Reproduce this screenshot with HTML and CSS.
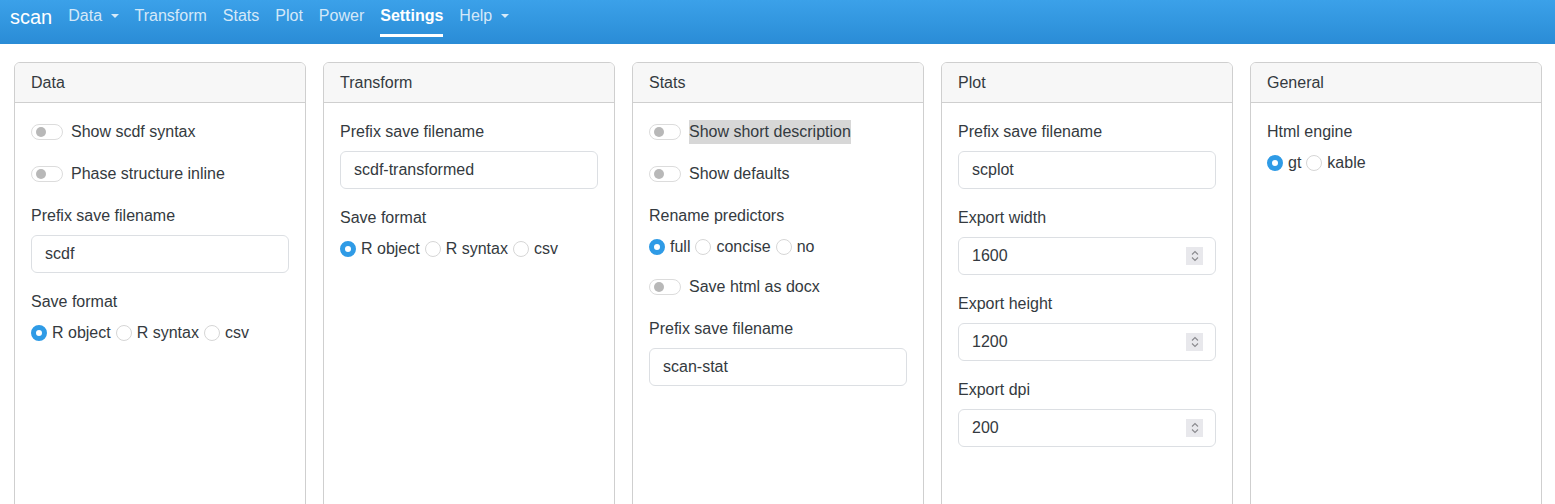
FILE: index.html
```html
<!DOCTYPE html>
<html lang="en">
<head>
  <meta charset="UTF-8" />
  <title>scan - Settings</title>
  <link rel="stylesheet" href="styles.css">
</head>
<body>

  <!-- Top navigation -->
  <nav class="navbar">
    <span class="navbar__brand">scan</span>
    <ul class="navbar__menu">
      <li class="navbar__item">Data <span class="caret"></span></li>
      <li class="navbar__item">Transform</li>
      <li class="navbar__item">Stats</li>
      <li class="navbar__item">Plot</li>
      <li class="navbar__item">Power</li>
      <li class="navbar__item navbar__item--active">Settings</li>
      <li class="navbar__item">Help <span class="caret"></span></li>
    </ul>
  </nav>

  <div class="card-grid">
    <!-- Data -->
    <div class="card">
      <div class="card__header">Data</div>
      <div class="card__body">
        <div class="switch-group">
          <span class="switch"></span>
          <span class="switch__label">Show scdf syntax</span>
        </div>
        <div class="switch-group">
          <span class="switch"></span>
          <span class="switch__label">Phase structure inline</span>
        </div>
        <div class="form-group">
          <label>Prefix save filename</label>
          <input class="form-control" type="text" value="scdf">
        </div>
        <div class="form-group form-group--radio">
          <label>Save format</label>
          <div class="radio-row">
            <span class="radio radio--checked"></span><span class="radio__label">R object</span>
            <span class="radio"></span><span class="radio__label">R syntax</span>
            <span class="radio"></span><span class="radio__label">csv</span>
          </div>
        </div>
      </div>
    </div>

    <!-- Transform -->
    <div class="card">
      <div class="card__header">Transform</div>
      <div class="card__body">
        <div class="form-group">
          <label>Prefix save filename</label>
          <input class="form-control" type="text" value="scdf-transformed">
        </div>
        <div class="form-group form-group--radio">
          <label>Save format</label>
          <div class="radio-row">
            <span class="radio radio--checked"></span><span class="radio__label">R object</span>
            <span class="radio"></span><span class="radio__label">R syntax</span>
            <span class="radio"></span><span class="radio__label">csv</span>
          </div>
        </div>
      </div>
    </div>

    <!-- Stats -->
    <div class="card">
      <div class="card__header">Stats</div>
      <div class="card__body">
        <div class="switch-group">
          <span class="switch"></span>
          <span class="switch__label switch__label--selected">Show short description</span>
        </div>
        <div class="switch-group">
          <span class="switch"></span>
          <span class="switch__label">Show defaults</span>
        </div>
        <div class="form-group form-group--radio">
          <label>Rename predictors</label>
          <div class="radio-row">
            <span class="radio radio--checked"></span><span class="radio__label">full</span>
            <span class="radio"></span><span class="radio__label">concise</span>
            <span class="radio"></span><span class="radio__label">no</span>
          </div>
        </div>
        <div class="switch-group">
          <span class="switch"></span>
          <span class="switch__label">Save html as docx</span>
        </div>
        <div class="form-group">
          <label>Prefix save filename</label>
          <input class="form-control" type="text" value="scan-stat">
        </div>
      </div>
    </div>

    <!-- Plot -->
    <div class="card">
      <div class="card__header">Plot</div>
      <div class="card__body">
        <div class="form-group">
          <label>Prefix save filename</label>
          <input class="form-control" type="text" value="scplot">
        </div>
        <div class="form-group">
          <label>Export width</label>
          <div class="number-input">
            <input class="form-control" type="text" value="1600">
            <span class="spinner">
              <svg width="10" height="14" viewBox="0 0 10 14"><path d="M2 5.5 L5 2.5 L8 5.5 M2 8.5 L5 11.5 L8 8.5" fill="none" stroke="#8a8a8e" stroke-width="1.1"/></svg>
            </span>
          </div>
        </div>
        <div class="form-group">
          <label>Export height</label>
          <div class="number-input">
            <input class="form-control" type="text" value="1200">
            <span class="spinner">
              <svg width="10" height="14" viewBox="0 0 10 14"><path d="M2 5.5 L5 2.5 L8 5.5 M2 8.5 L5 11.5 L8 8.5" fill="none" stroke="#8a8a8e" stroke-width="1.1"/></svg>
            </span>
          </div>
        </div>
        <div class="form-group">
          <label>Export dpi</label>
          <div class="number-input">
            <input class="form-control" type="text" value="200">
            <span class="spinner">
              <svg width="10" height="14" viewBox="0 0 10 14"><path d="M2 5.5 L5 2.5 L8 5.5 M2 8.5 L5 11.5 L8 8.5" fill="none" stroke="#8a8a8e" stroke-width="1.1"/></svg>
            </span>
          </div>
        </div>
      </div>
    </div>

    <!-- General -->
    <div class="card">
      <div class="card__header">General</div>
      <div class="card__body">
        <div class="form-group form-group--radio">
          <label>Html engine</label>
          <div class="radio-row">
            <span class="radio radio--checked"></span><span class="radio__label">gt</span>
            <span class="radio"></span><span class="radio__label">kable</span>
          </div>
        </div>
      </div>
    </div>
  </div>

</body>
</html>
```

FILE: styles.css
```css
* {
  box-sizing: border-box;
  margin: 0;
  padding: 0;
}

body {
  font-family: "Liberation Sans", Arial, sans-serif;
  font-size: 16px;
  line-height: 24px;
  color: #343a40;
  background-color: #fff;
}

/* Navbar */
.navbar {
  display: flex;
  align-items: flex-start;
  height: 44px;
  padding: 0 10px;
  background: linear-gradient(#3ba1e9, #2a8cd6);
}

.navbar__brand {
  font-size: 20px;
  line-height: 35px;
  color: #fff;
  margin-right: 16px;
}

.navbar__menu {
  display: flex;
  list-style: none;
  gap: 16px;
}

.navbar__item {
  line-height: 31px;
  color: rgba(255, 255, 255, 0.8);
  padding-bottom: 3px;
  border-bottom: 3px solid transparent;
}

.navbar__item--active {
  color: #fff;
  font-weight: bold;
  border-bottom-color: #fff;
}

.caret {
  display: inline-block;
  margin-left: 4px;
  vertical-align: 3px;
  border-top: 4px solid rgba(255, 255, 255, 0.8);
  border-left: 4px solid transparent;
  border-right: 4px solid transparent;
}

/* Cards */
.card-grid {
  display: grid;
  grid-template-columns: repeat(5, 292px);
  gap: 17px;
  padding: 18px 13px 0 14px;
}

.card {
  border: 1px solid #cfcfcf;
  border-radius: 6px;
  min-height: 470px;
  overflow: hidden;
}

.card__header {
  background-color: #f7f7f7;
  border-bottom: 1px solid #cfcfcf;
  padding: 8px 16px 7px;
}

.card__body {
  padding: 16px;
}

/* Form bits */
.form-group {
  margin-bottom: 16px;
}

.form-group--radio {
  margin-bottom: 15px;
}

.form-group label {
  display: block;
  padding-top: 1px;
  margin-bottom: 7px;
}

.form-control {
  display: block;
  width: 100%;
  height: 38px;
  padding: 0 13px;
  font-family: inherit;
  font-size: 16px;
  color: #343a40;
  border: 1px solid #dcdfe3;
  border-radius: 6px;
  background: #fff;
}

.number-input {
  position: relative;
}

.spinner {
  position: absolute;
  right: 13px;
  top: 10px;
  width: 17px;
  height: 18px;
  background: #e8e8ec;
  display: flex;
  align-items: center;
  justify-content: center;
}

/* Switches */
.switch-group {
  display: flex;
  align-items: center;
  padding-top: 1px;
  margin-bottom: 17px;
}

.switch {
  position: relative;
  width: 32px;
  height: 16px;
  border: 1px solid #dcdcdc;
  border-radius: 8px;
  margin-right: 8px;
}

.switch::after {
  content: "";
  position: absolute;
  left: 4px;
  top: 2px;
  width: 10px;
  height: 10px;
  border-radius: 50%;
  background: #b8b8b8;
}

.switch__label--selected {
  background: #d7d7d7;
}

/* Radios */
.radio-row {
  display: flex;
  align-items: center;
}

.radio {
  width: 16px;
  height: 16px;
  border-radius: 50%;
  border: 1px solid #d6d6d6;
  margin-right: 5px;
}

.radio--checked {
  border: 5px solid #2f9be6;
  background: #fff;
}

.radio__label {
  margin-right: 5px;
}
```
